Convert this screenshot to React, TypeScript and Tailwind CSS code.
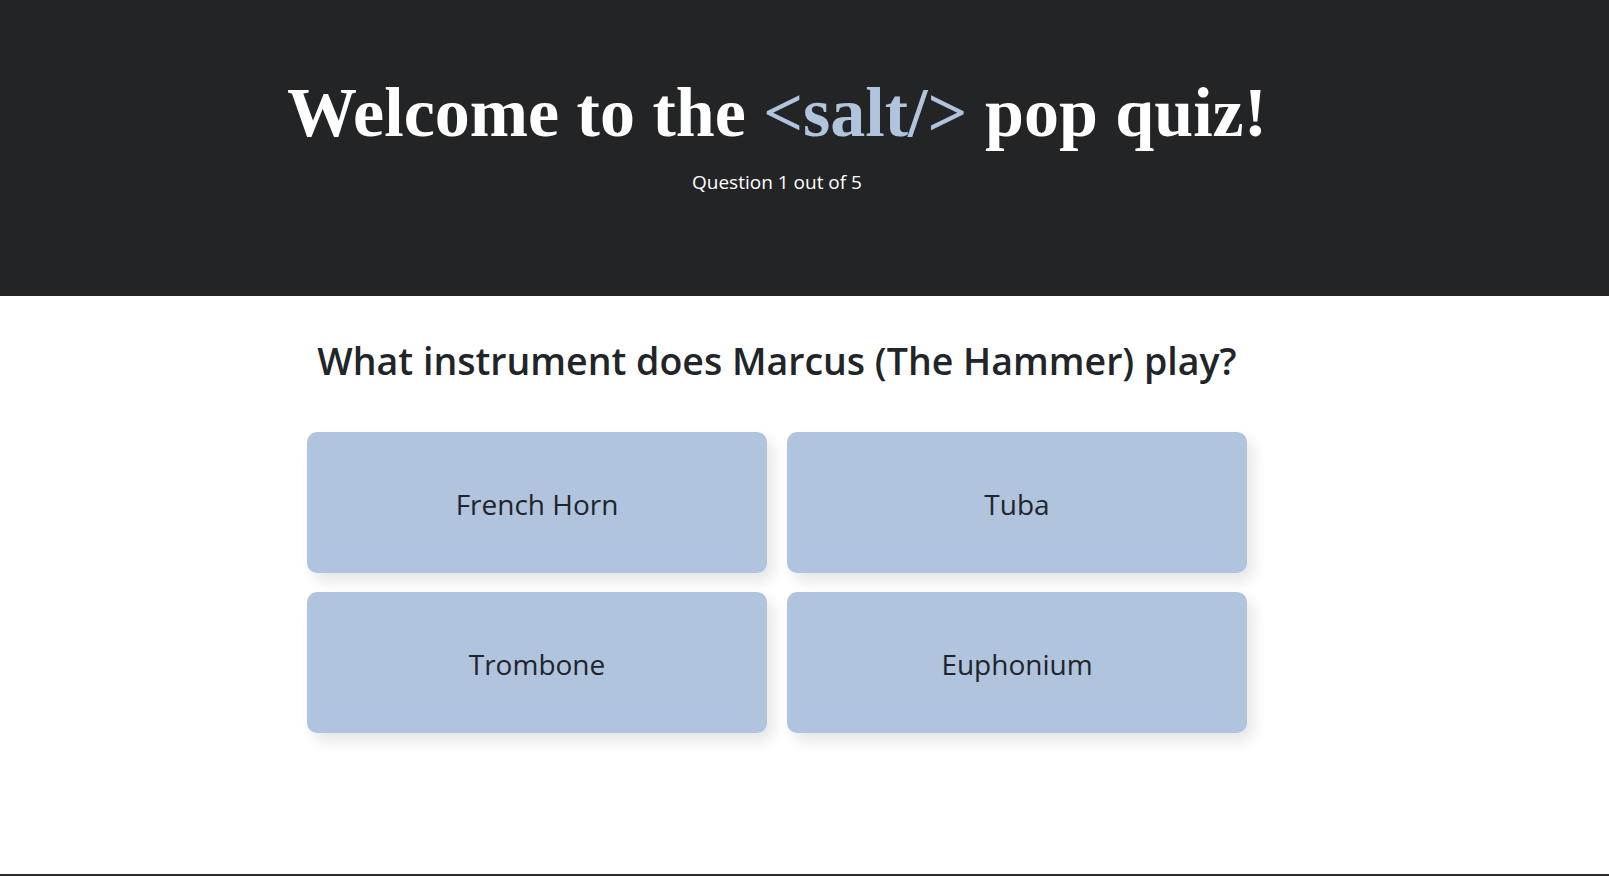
import React from "react";

const answers = ["French Horn", "Tuba", "Trombone", "Euphonium"];

export default function App() {
  return (
    <div className="w-full h-[876px] flex flex-col bg-white overflow-hidden">
      <header className="h-[296px] shrink-0 bg-[#232426] flex flex-col items-center pr-[55px]">
        <h1
          className="mt-[73px] text-[70px] leading-[80px] font-bold text-white"
          style={{ fontFamily: '"Liberation Serif", "Times New Roman", serif' }}
        >
          Welcome to the <span className="text-[#b0c4de]">&lt;salt/&gt;</span> pop quiz!
        </h1>
        <p
          className="mt-[16px] text-[19px] leading-[26px] text-white"
          style={{ fontFamily: '"Open Sans", "Noto Sans", sans-serif' }}
        >
          Question 1 out of 5
        </p>
      </header>
      <main
        className="flex-1 flex flex-col items-center pr-[55px] text-[#212529]"
        style={{ fontFamily: '"Open Sans", "Noto Sans", sans-serif' }}
      >
        <h2 className="mt-[40px] text-[37.5px] leading-[50px] font-semibold">
          What instrument does Marcus (The Hammer) play?
        </h2>
        <div className="mt-[46px] grid grid-cols-2 gap-x-[20px] gap-y-[19px] w-[940px]">
          {answers.map((a) => (
            <button
              key={a}
              className="h-[141px] pt-[2px] rounded-[10px] bg-[#b0c4de] text-[28px] text-[#212529] shadow-[6px_8px_14px_rgba(0,0,0,0.1)]"
            >
              {a}
            </button>
          ))}
        </div>
      </main>
      <div className="h-[2px] shrink-0 bg-[#2b2d31]" />
    </div>
  );
}
